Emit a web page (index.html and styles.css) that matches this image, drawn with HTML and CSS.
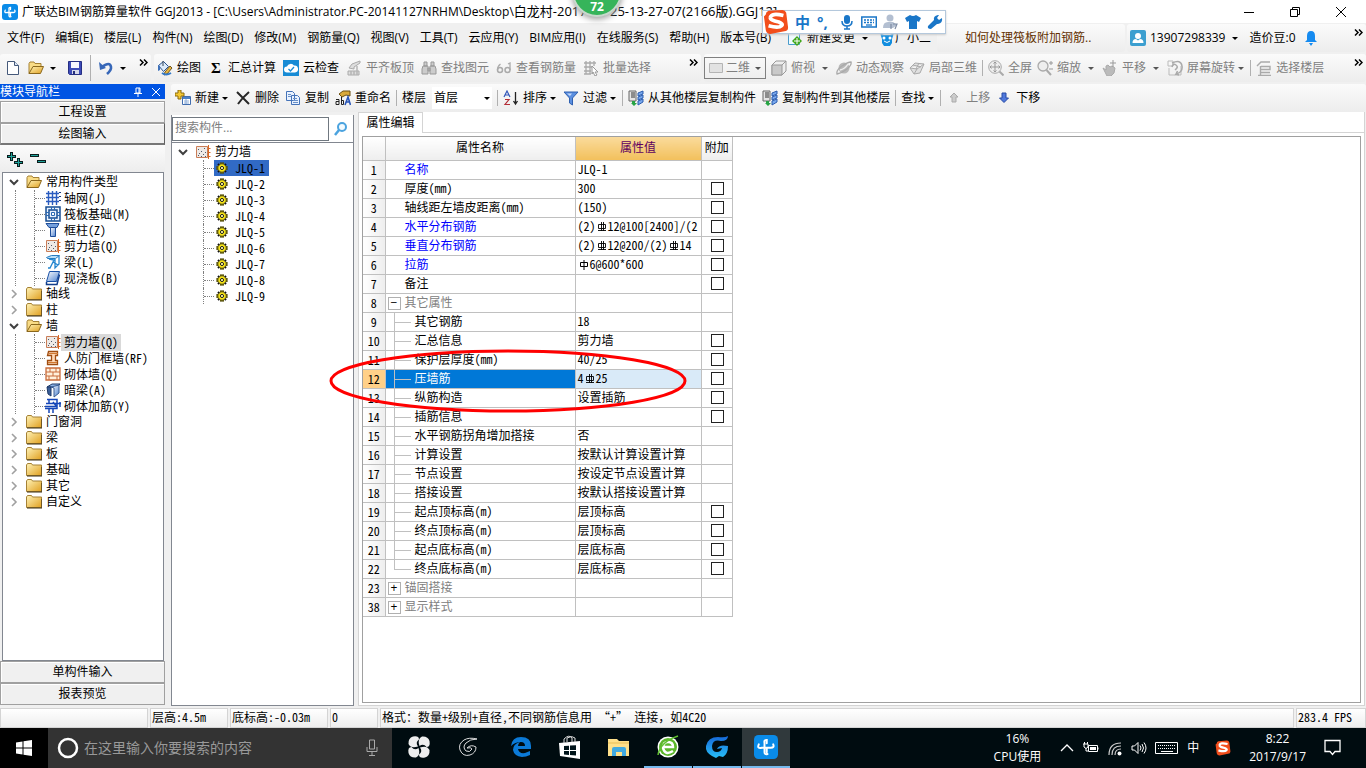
FILE: index.html
```html
<!DOCTYPE html>
<html lang="zh-CN">
<head>
<meta charset="utf-8">
<title>广联达BIM钢筋算量软件 GGJ2013</title>
<link rel="stylesheet" href="styles.css">
</head>
<body>
<svg class="defs" aria-hidden="true">
<defs>
<linearGradient id="gold" x1="0" y1="0" x2="1" y2="1"><stop offset="0" stop-color="#fff3b8"/><stop offset="1" stop-color="#e0a020"/></linearGradient>
<linearGradient id="steel" x1="0" y1="0" x2="1" y2="1"><stop offset="0" stop-color="#fff"/><stop offset="1" stop-color="#4f83d0"/></linearGradient>
<linearGradient id="aqua" x1="0" y1="0" x2="0" y2="1"><stop offset="0" stop-color="#1667d8"/><stop offset="1" stop-color="#28c0f8"/></linearGradient>
</defs>
<symbol id="app" viewBox="0 0 16 16"><rect width="16" height="16" rx="3" fill="#0a8be8"/><path d="M8.500 5.500V3.300q-2 0-1.500 2v6.200q0 1.700 2 1.200M3.200 6.200q-1.400 3 2 2.300h6q2.600 0 1.600-2.300M8.500 8.500v3" fill="none" stroke="#fff" stroke-width="1.300" stroke-linecap="round"/></symbol>
<symbol id="folder" viewBox="0 0 16 16"><path d="M.5 13.500V3l1-1.500h4l1 1.500h9v10.500z" fill="url(#gold)" stroke="#a58135"/><path d="M1 14h15V5" fill="none" stroke="#3e3112"/></symbol>
<symbol id="folder-open" viewBox="0 0 16 16"><path d="M1 13.500v-10l1-1.500h4l1 1.500h6v3" fill="#f9dc86" stroke="#a58135"/><path d="M1 13.500l4-7h10.500l-3 7z" fill="url(#gold)" stroke="#8a671c"/></symbol>
<symbol id="grid" viewBox="0 0 16 16"><path d="M3.500 1v14M7.500 1v14M11.500 1v14M1 3.500h13M1 7.500h13M1 11.500h13" stroke="#2a5cc0" fill="none" stroke-width="1.400"/><path d="M14 2.500h2M14 6.500h2M14 10.500h2" stroke="#16377c"/></symbol>
<symbol id="raft" viewBox="0 0 16 16"><path d="M1 1h14v14H1zM4 4h8v8H4z" fill="#e8f2ff" stroke="#174d92" stroke-width="1.500"/><path d="M6.500 6.500h3v3h-3zM6.500 1v3M9.500 1v3M6.500 12v3M9.500 12v3M1 6.500h3M1 9.500h3M12 6.500h3M12 9.500h3" fill="#fff" stroke="#2868b4"/></symbol>
<symbol id="column" viewBox="0 0 16 16"><path d="M1 1.500h13l-2 4H4z" fill="#739fdc" stroke="#1d4d9a"/><path d="M5.500 5.500h5v9h-5z" fill="url(#steel)" stroke="#1d4d9a"/></symbol>
<symbol id="wall" viewBox="0 0 16 16"><path d="M1.500 2.500h11v11h-11z" fill="#eee9e5" stroke="#c97d57"/><path d="M3 5.500h1M6 7.500h1M9 4.500h1M4 9.500h1M8 10.500h1M10 8.500h1M3 11.500h1M6 12.500h1M10 12.500h1" stroke="#505866"/><path d="M13.500 1v14M13 4.500h2.500M13 8.500h2.500M13 12.500h2.500" stroke="#d96924"/></symbol>
<symbol id="beam" viewBox="0 0 16 16"><path d="M1.500 3.500l5-2h8l-4 3h-8z" fill="#b8def8" stroke="#247ac0"/><path d="M4 5l5 1-4 8H3M10 5v9l4-4V2M8 8l5 3" fill="none" stroke="#2486cf" stroke-width="1.300"/></symbol>
<symbol id="slab" viewBox="0 0 16 16"><path d="M4.500 1.500h10l-3 10h-10z" fill="url(#steel)" stroke="#174fa5"/><path d="M1.500 12v2.500H12l2.500-10" fill="none" stroke="#123e8c" stroke-width="1.500"/></symbol>
<symbol id="frame" viewBox="0 0 16 16"><path d="M3.500 1.500h9v4h-2v5h2v4h-10v-4h4v-5h-4z" fill="#ffd9b8" stroke="#a04c10" stroke-width="1.300"/><path d="M4 3.500h9M3 12.500h9" stroke="#d07830"/></symbol>
<symbol id="brick" viewBox="0 0 16 16"><path d="M1 2h14v12H1z" fill="#fff0dc" stroke="#c96c3c" stroke-width="1.300"/><path d="M1 6h14M1 10h14M5 2v4M11 2v4M8 6v4M4 10v4M12 10v4" stroke="#c96c3c"/></symbol>
<symbol id="hidden" viewBox="0 0 16 16"><path d="M2 5l5-3h8l-4 3z" fill="#8fb5e8" stroke="#1c3868"/><path d="M2 5h4v9l-3-2z" fill="#3b5f98" stroke="#1c3868"/><path d="M6 5l8-2v8l-5 4V6z" fill="url(#steel)" stroke="#385c94"/></symbol>
<symbol id="tie" viewBox="0 0 16 16"><path d="M2 1.500h10v9H0M1 5.500h15M0 8.500h12M4 10v5M8 10v5M4 1v5M8 4l4 5M15 4v5" fill="none" stroke="#1546b8" stroke-width="1.500"/></symbol>
<symbol id="gear" viewBox="0 0 16 16"><path d="M6 3.500h4M6 12.500h4M3.500 6v4M12.500 6v4M4 4l2 2M12 4l-2 2M4 12l2-2M12 12l-2-2" stroke="#111" stroke-width="2"/><circle cx="8" cy="8" r="4" fill="#ffed18" stroke="#333" stroke-width=".6"/><path d="M7 2.500v3M9 2.500v3M7 10.500v3M9 10.500v3M2.500 7h3M2.500 9h3M10.500 7h3M10.500 9h3" stroke="#d9c800" stroke-width=".8"/><circle cx="8" cy="8" r="1.600" fill="#fff9a0" stroke="#222"/></symbol>
<symbol id="new" viewBox="0 0 16 16"><path d="M2.500 1.500h7l4 4v9h-11z" fill="#fff" stroke="#45597a"/><path d="M9.500 1.500v4h4" fill="#dce7f6" stroke="#45597a"/></symbol>
<symbol id="save" viewBox="0 0 16 16"><path d="M1.500 1.500h13v13h-12l-1-1z" fill="#3d4bb8" stroke="#252e83"/><path d="M4 2h8v6H4z" fill="#f7f7ff"/><path d="M5 10h7v4H5z" fill="#d6d9ea"/><path d="M6 11h2v3H6z" fill="#26307d"/></symbol>
<symbol id="undo" viewBox="0 0 16 16"><path d="M4 7q8-6 9 0 .5 3-4 7" fill="none" stroke="#3767b8" stroke-width="2.600"/><path d="M1 2l1 8 6-2z" fill="#3767b8"/></symbol>
<symbol id="paint" viewBox="0 0 16 16"><path d="M1.500 5.500l5-4 5 5-5 5z" fill="#dceafa" stroke="#2b538e"/><path d="M1 5v6l2-1V6z" fill="#3e71ba"/><path d="M6 6V1" stroke="#345"/><path d="M8 12l5-6 2 2-5 6-3 1z" fill="#e8b63e" stroke="#6d5420"/><path d="M5 13q4 3 9 0" fill="none" stroke="#3278c8" stroke-width="2"/></symbol>
<symbol id="cloud" viewBox="0 0 16 16"><path d="M0 0h16v16H0z" fill="#178bd5"/><path d="M4 12.500a3 3 0 010-6 4 4 0 017-1 3.500 3.500 0 011 7z" fill="#fff"/><path d="M5.500 9l2 2L11 7" fill="none" stroke="#178bd5" stroke-width="1.300"/></symbol>
<symbol id="align" viewBox="0 0 16 16"><path d="M3 8l3-4 8-3v2L8 7v2zM2 11h11v4H2z" fill="#ddd" stroke="#aaa"/><path d="M5 11v4M8 11v4M11 6v9" stroke="#b5b5b5" stroke-width="1.500"/></symbol>
<symbol id="find" viewBox="0 0 16 16"><path d="M3 2h3v4H3zM10 2h3v4h-3zM2 6h5v8H1V9zM9 6h5l1 3v5H9zM7 8h2v3H7z" fill="#ccc" stroke="#999"/></symbol>
<symbol id="glasses" viewBox="0 0 16 16"><circle cx="4" cy="10" r="2.500" fill="none" stroke="#aaa" stroke-width="1.500"/><circle cx="11.500" cy="10" r="2.500" fill="none" stroke="#aaa" stroke-width="1.500"/><path d="M1.500 10q0-4 3-6M14 10V3l-2 1" fill="none" stroke="#aaa" stroke-width="1.300"/></symbol>
<symbol id="batch" viewBox="0 0 16 16"><path d="M1 3h12M1 7h9M1 11h7M3 1v13M7 1v13M11 1v5M1 14h7" fill="none" stroke="#aaa" stroke-width="1.300"/><path d="M9 6l6 6h-3l2 3-2 1-2-4-1 2z" fill="#fff" stroke="#999"/></symbol>
<symbol id="rect" viewBox="0 0 16 16"><path d="M1.500 3.500h13v9h-13z" fill="#e2e2e2" stroke="#b4b4b4"/></symbol>
<symbol id="cube" viewBox="0 0 16 16"><path d="M1 5l4-4h10v10l-4 4H1z" fill="#eee" stroke="#999"/><path d="M1 5h10v10H1zM11 5l4-4" fill="#c9c9c9" stroke="#999"/></symbol>
<symbol id="orbit" viewBox="0 0 16 16"><circle cx="8" cy="8" r="5.500" fill="#b9b9b9"/><path d="M1 14q-1-4 5-8t9-4q1 3-4 7t-10 5z" fill="none" stroke="#aaa" stroke-width="1.300"/><path d="M4 10q5-1 8-6" stroke="#eee" fill="none" stroke-width="1.400"/></symbol>
<symbol id="local" viewBox="0 0 16 16"><path d="M1 8l5-5 9 1-4 9-6 1zM1 8l7 1 7-5M8 9l-3 5M4 5l8 2M10 3L7 9" fill="#e0e0e0" stroke="#aaa"/></symbol>
<symbol id="full" viewBox="0 0 16 16"><circle cx="7" cy="7" r="6.300" fill="#eee" stroke="#aaa"/><path d="M7 2v10M2 7h10M5.500 3.500L7 2l1.500 1.500M5.500 10.500L7 12l1.500-1.500M3.500 5.500L2 7l1.500 1.500M10.500 5.500L12 7l-1.500 1.500" fill="none" stroke="#999"/><path d="M11.500 11.500l4 4" stroke="#aaa" stroke-width="2"/></symbol>
<symbol id="zoom" viewBox="0 0 16 16"><circle cx="6" cy="6" r="5" fill="#eee" stroke="#aaa" stroke-width="1.300"/><path d="M9.500 10l4.500 5" stroke="#aaa" stroke-width="2"/><path d="M12 3h4M14 1v4M12 9h4" stroke="#999"/></symbol>
<symbol id="hand" viewBox="0 0 16 16"><path d="M1 8l3 2V6l2-1 2 2 2-1 3 2-1 5-3 3H5z" fill="#bbb" stroke="#aaa"/><path d="M11 0v7M8 3h6" stroke="#999"/></symbol>
<symbol id="rotate" viewBox="0 0 16 16"><path d="M1 1h5v5H1zM2 8v7h12V6" fill="none" stroke="#bbb"/><path d="M5 3q9-4 10 3 1 6-6 8l1.500-3M9 14l3 1M5 7q1-4 4-2t-1 5" fill="none" stroke="#aaa" stroke-width="1.500"/></symbol>
<symbol id="floors" viewBox="0 0 16 16"><path d="M1 6l4-4h9M5 6.500h9v3H5M5 12.500h9M2 15.500h13M4.500 6v9" fill="none" stroke="#aaa" stroke-width="1.400"/></symbol>
<symbol id="add" viewBox="0 0 16 16"><path d="M7.500 6.500h8v8h-8z" fill="#fff" stroke="#416daf"/><path d="M8 7h7v2H8z" fill="#4c81c8"/><path d="M9 11h5M9 13h5M11 9v5" stroke="#8faed8"/><path d="M3 0h3v3h3v3H6v3H3V6H0V3h3z" fill="#f5c832" stroke="#8a6b0d"/></symbol>
<symbol id="del" viewBox="0 0 16 16"><path d="M2 2q5 5 12 12M14 2Q7 8 3 14" fill="none" stroke="#282828" stroke-width="2"/></symbol>
<symbol id="copy" viewBox="0 0 16 16"><path d="M1.500 1.500h6l2 2v7h-8zM6.500 5.500h6l2 2v7h-8z" fill="#e9f2ff" stroke="#4573b8"/><path d="M3 4.500h3M3 6.500h3M8 8.500h4M8 10.500h5M8 12.500h5" stroke="#6990c8"/></symbol>
<symbol id="rename" viewBox="0 0 16 16"><path d="M4 4l4-3h7v5l-4-1-4 2z" fill="#d9a93a" stroke="#6c5012"/><path d="M1 9.500h3v5H1v-3h3M6.500 7v7.500h2v-4h-2" fill="none" stroke="#222"/><path d="M10 15l3-8 2.500 8M11 12h4" fill="none" stroke="#2855b8" stroke-width="1.600"/></symbol>
<symbol id="sort" viewBox="0 0 16 16"><path d="M1 7l3-6 3 6M2 5h4" fill="none" stroke="#3257ba" stroke-width="1.200"/><path d="M2 9.500h4l-4 5h5" fill="none" stroke="#b32d36" stroke-width="1.200"/><path d="M12.500 2v12M10.500 11l2 3 2-3" fill="none" stroke="#222" stroke-width="1.300"/></symbol>
<symbol id="filter" viewBox="0 0 16 16"><path d="M1 2h14L9.500 8v7L6.500 13V8z" fill="#5b8fe0" stroke="#2f60b0"/><path d="M4 3.500h5L7 6z" fill="#c8dcfa"/></symbol>
<symbol id="floorcopy" viewBox="0 0 16 16"><path d="M1 1h7v10H1z" fill="#e5e5e5" stroke="#666"/><path d="M3 3h4M3 5h4M3 7h4" stroke="#333"/><path d="M10 3l5-2v3l-5 2zM10 7l5-2v3l-5 2zM10 11l5-2v3l-5 3z" fill="#79a8ed" stroke="#2b5cae"/><path d="M4 11h3v2h2l-3 3-3-3h1z" fill="#27a344"/></symbol>
<symbol id="up" viewBox="0 0 16 16"><path d="M8 3l4 4h-2v5H6V7H4z" fill="#ccc" stroke="#aaa"/></symbol>
<symbol id="down" viewBox="0 0 16 16"><path d="M6 3h4v5h2.500L8 12.500 3.500 8H6z" fill="#4f78dc" stroke="#274aa5"/></symbol>
<symbol id="change" viewBox="0 0 16 16"><path d="M1.500 1.500h11v13h-11z" fill="#effaff" stroke="#4a9ccc"/><path d="M10 6l5 5-5 5-5-5z" fill="#3fa619"/><path d="M10 8v6M7 11h6" stroke="#fff"/></symbol>
<symbol id="fairy" viewBox="0 0 16 16"><path d="M1 3l4 2h6l4-2-2 6v4l-2 3H5l-2-3V9z" fill="#118ddf"/><circle cx="5" cy="8" r="1.500" fill="#fff"/><circle cx="11" cy="8" r="1.500" fill="#fff"/><path d="M5 11q3 3 6 0" fill="none" stroke="#fff"/></symbol>
<symbol id="user" viewBox="0 0 16 16"><rect width="16" height="16" rx="2" fill="#3c9fd0"/><circle cx="8" cy="6" r="3" fill="#fff"/><path d="M2.500 13q0-4 3.500-4l2 1.500L10 9q3.500 0 3.500 4z" fill="#fff"/></symbol>
<symbol id="bell" viewBox="0 0 16 16"><path d="M8 1q4 0 4 5v4l2 2H2l2-2V6q0-5 4-5zM6 13h4l-2 3z" fill="#168bf0"/></symbol>
<symbol id="lens" viewBox="0 0 16 16"><circle cx="9" cy="6" r="4" fill="#f3fbff" stroke="#4ba3df" stroke-width="2"/><path d="M6 9l-4 5" stroke="#4ba3df" stroke-width="2.500"/></symbol>
<symbol id="sogou" viewBox="0 0 28 28"><path d="M3 6q0-3 3-4l15-1q3 0 4 3l2 16q0 4-4 4L8 27q-4 0-5-4L1 8z" fill="#f24e1c"/><path d="M22 7q-13-3-14 2-1 3 9 5 5 2 3 4-3 3-14 0" fill="none" stroke="#fff" stroke-width="4"/></symbol>
<symbol id="mic" viewBox="0 0 16 16"><rect x="5" y="1" width="6" height="9" rx="3" fill="#1976c8"/><path d="M3 7q0 5 5 5t5-5M8 12v3M5 15h6" fill="none" stroke="#1976c8" stroke-width="1.500"/></symbol>
<symbol id="keys" viewBox="0 0 16 16"><path d="M.8 3h14.500v10H.8z" fill="#fff" stroke="#1976c8" stroke-width="1.500"/><path d="M3 6h10M3 8.500h10" stroke="#1976c8" stroke-width="1.500" stroke-dasharray="2 1"/><path d="M5 11h6" stroke="#1976c8" stroke-width="1.300"/></symbol>
<symbol id="person" viewBox="0 0 16 16"><circle cx="7" cy="4" r="3.500" fill="#b3bfd1"/><path d="M0 14q0-6 5-6h5l4 3-4 3z" fill="#b3bfd1"/><path d="M8 10v5M10 10h4l-2 5" fill="none" stroke="#7f8da5" stroke-width="1.200"/></symbol>
<symbol id="shirt" viewBox="0 0 16 16"><path d="M5 1q3 2 6 0l5 3-2 4-2-1v8H4V7L2 8 0 4z" fill="#1976c8"/></symbol>
<symbol id="wrench" viewBox="0 0 16 16"><path d="M1 12l6-6q-1-4 4-5l1 0-2 3 2 2 3-2q1 5-4 6h-1l-6 5q-4 0-3-3z" fill="#1976c8"/></symbol>
<symbol id="rebar" viewBox="0 0 10 10"><path d="M1.500 2.500h7v4h-7zM4.500 0v9M6.500 0v9M1 8.500h8" fill="none" stroke="#000" stroke-width=".9"/></symbol>
<symbol id="rebar1" viewBox="0 0 10 10"><path d="M1.500 2.500h7v4h-7zM5 0v10" fill="none" stroke="#000"/></symbol>
<symbol id="chev" viewBox="0 0 10 10"><path d="M3 1l4 4-4 4" fill="none" stroke="#a0a0a0" stroke-width="1.600"/></symbol>
<symbol id="chevd" viewBox="0 0 10 10"><path d="M1 3l4 4 4-4" fill="none" stroke="#404040" stroke-width="2"/></symbol>
<symbol id="more" viewBox="0 0 9 7"><path d="M1 .5l3 3-3 3M5 .5l3 3-3 3" fill="none" stroke="#000" stroke-width="1.500"/></symbol>
</svg>

<header class="titlebar">
  <svg class="i"><use href="#app"/></svg>
  <h1>广联达BIM钢筋算量软件 GGJ2013 - [C:\Users\Administrator.PC-20141127NRHM\Desktop\<span class="file">白龙村-2017-08-25-13-27-07(2166版).GGJ12]</span></h1>
  <div class="winbtns">
    <button aria-label="最小化"><svg viewBox="0 0 12 12"><path d="M1 6.500h10" stroke="#000"/></svg></button>
    <button aria-label="还原"><svg viewBox="0 0 12 12"><path d="M1.500 3.500h7v7h-7zM3.500 3v-1.500h7v7H9" fill="none" stroke="#000"/></svg></button>
    <button aria-label="关闭"><svg viewBox="0 0 12 12"><path d="M1 1l10 10M11 1L1 11" stroke="#000"/></svg></button>
  </div>
</header>
<div class="ball">72</div>
<div class="ime">
  <svg class="ime-logo"><use href="#sogou"/></svg>
  <b>中</b><b>°,</b>
  <svg class="i"><use href="#mic"/></svg><svg class="i"><use href="#keys"/></svg><svg class="i"><use href="#person"/></svg><svg class="i"><use href="#shirt"/></svg><svg class="i"><use href="#wrench"/></svg>
</div>

<nav class="menubar">
  <div class="menus">
    <button>文件(F)</button><button>编辑(E)</button><button>楼层(L)</button><button>构件(N)</button><button>绘图(D)</button><button>修改(M)</button><button>钢筋量(Q)</button><button>视图(V)</button><button>工具(T)</button><button>云应用(Y)</button><button>BIM应用(I)</button><button>在线服务(S)</button><button>帮助(H)</button><button>版本号(B)</button>
  </div>
  <div class="extra">
    <button class="tb"><svg class="i"><use href="#change"/></svg>新建变更<span class="dd"></span></button>
    <button class="tb tight"><svg class="i"><use href="#fairy"/></svg>广小二</button>
  </div>
  <a class="tip band" href="#">如何处理筏板附加钢筋..</a>
  <div class="account band">
    <button class="tb"><svg class="i"><use href="#user"/></svg>13907298339<span class="dd"></span></button>
    <span>造价豆:0</span><svg class="i"><use href="#bell"/></svg>
    <svg class="more"><use href="#more"/></svg>
  </div>
</nav>

<div class="tools">
  <div class="bar files band">
    <button class="tb" aria-label="新建"><svg class="i"><use href="#new"/></svg></button>
    <button class="tb" aria-label="打开"><svg class="i"><use href="#folder-open"/></svg><span class="dd"></span></button>
    <button class="tb" aria-label="保存"><svg class="i"><use href="#save"/></svg></button>
    <span class="sep"></span>
    <button class="tb" aria-label="撤销"><svg class="i"><use href="#undo"/></svg><span class="dd"></span></button>
    <svg class="more"><use href="#more"/></svg>
  </div>
  <div class="bar draw band">
    <button class="tb"><svg class="i"><use href="#paint"/></svg>绘图</button>
    <button class="tb"><span class="i sigma">Σ</span>汇总计算</button>
    <button class="tb"><svg class="i"><use href="#cloud"/></svg>云检查</button>
    <button class="tb off"><svg class="i"><use href="#align"/></svg>平齐板顶</button>
    <button class="tb off"><svg class="i"><use href="#find"/></svg>查找图元</button>
    <button class="tb off"><svg class="i"><use href="#glasses"/></svg>查看钢筋量</button>
    <button class="tb off"><svg class="i"><use href="#batch"/></svg>批量选择</button>
    <svg class="more"><use href="#more"/></svg>
  </div>
  <div class="bar view band">
    <button class="tb off boxed"><svg class="i"><use href="#rect"/></svg>二维<span class="dd"></span></button>
    <button class="tb off"><svg class="i"><use href="#cube"/></svg>俯视<span class="dd"></span></button>
    <button class="tb off"><svg class="i"><use href="#orbit"/></svg>动态观察</button>
    <button class="tb off"><svg class="i"><use href="#local"/></svg>局部三维</button>
    <span class="sep"></span>
    <button class="tb off"><svg class="i"><use href="#full"/></svg>全屏</button>
    <button class="tb off"><svg class="i"><use href="#zoom"/></svg>缩放<span class="dd"></span></button>
    <button class="tb off"><svg class="i"><use href="#hand"/></svg>平移<span class="dd"></span></button>
    <button class="tb off near"><svg class="i"><use href="#rotate"/></svg>屏幕旋转<span class="dd"></span></button>
    <span class="sep"></span>
    <button class="tb off"><svg class="i"><use href="#floors"/></svg>选择楼层</button>
    <svg class="more"><use href="#more"/></svg>
  </div>
</div>

<main>
  <aside class="nav">
    <div class="nav-title"><span>模块导航栏</span>
      <svg class="s" viewBox="0 0 10 10"><path d="M3 1h4v5H3zM1 6.500h8M5 6v4M6 1v5" fill="none" stroke="#fff"/></svg>
      <svg class="s" viewBox="0 0 10 10"><path d="M1 1l8 8M9 1L1 9" stroke="#fff"/></svg>
    </div>
    <button class="wide">工程设置</button>
    <button class="wide on">绘图输入</button>
    <div class="expand">
      <button aria-label="全部展开"><svg viewBox="0 0 16 16"><path d="M3 0h3v3h3v3H6v3H3V6H0V3h3z" fill="#0a1c1c"/><path d="M10 6h3v3h3v3h-3v3h-3v-3H7V9h3z" fill="#0a1c1c"/><path d="M4.500 1v7M1 4.500h7M11.500 7v7M8 10.500h7" stroke="#1fa39b"/></svg></button>
      <button aria-label="全部折叠"><svg viewBox="0 0 16 16"><path d="M0 2h9v3H0zM7 8h9v3H7z" fill="#0a1c1c"/><path d="M1 3.500h7M8 9.500h7" stroke="#1fa39b"/></svg></button>
    </div>
    <ul class="tree">
      <li><div class="row"><svg class="c"><use href="#chevd"/></svg><svg class="i"><use href="#folder-open"/></svg><span>常用构件类型</span></div>
        <ul>
          <li><svg class="i"><use href="#grid"/></svg><span>轴网<i>(J)</i></span></li>
          <li><svg class="i"><use href="#raft"/></svg><span>筏板基础<i>(M)</i></span></li>
          <li><svg class="i"><use href="#column"/></svg><span>框柱<i>(Z)</i></span></li>
          <li><svg class="i"><use href="#wall"/></svg><span>剪力墙<i>(Q)</i></span></li>
          <li><svg class="i"><use href="#beam"/></svg><span>梁<i>(L)</i></span></li>
          <li><svg class="i"><use href="#slab"/></svg><span>现浇板<i>(B)</i></span></li>
        </ul></li>
      <li><div class="row"><svg class="c"><use href="#chev"/></svg><svg class="i"><use href="#folder"/></svg><span>轴线</span></div></li>
      <li><div class="row"><svg class="c"><use href="#chev"/></svg><svg class="i"><use href="#folder"/></svg><span>柱</span></div></li>
      <li><div class="row"><svg class="c"><use href="#chevd"/></svg><svg class="i"><use href="#folder-open"/></svg><span>墙</span></div>
        <ul>
          <li><svg class="i"><use href="#wall"/></svg><span class="cur">剪力墙<i>(Q)</i></span></li>
          <li><svg class="i"><use href="#frame"/></svg><span>人防门框墙<i>(RF)</i></span></li>
          <li><svg class="i"><use href="#brick"/></svg><span>砌体墙<i>(Q)</i></span></li>
          <li><svg class="i"><use href="#hidden"/></svg><span>暗梁<i>(A)</i></span></li>
          <li><svg class="i"><use href="#tie"/></svg><span>砌体加筋<i>(Y)</i></span></li>
        </ul></li>
      <li><div class="row"><svg class="c"><use href="#chev"/></svg><svg class="i"><use href="#folder"/></svg><span>门窗洞</span></div></li>
      <li><div class="row"><svg class="c"><use href="#chev"/></svg><svg class="i"><use href="#folder"/></svg><span>梁</span></div></li>
      <li><div class="row"><svg class="c"><use href="#chev"/></svg><svg class="i"><use href="#folder"/></svg><span>板</span></div></li>
      <li><div class="row"><svg class="c"><use href="#chev"/></svg><svg class="i"><use href="#folder"/></svg><span>基础</span></div></li>
      <li><div class="row"><svg class="c"><use href="#chev"/></svg><svg class="i"><use href="#folder"/></svg><span>其它</span></div></li>
      <li><div class="row"><svg class="c"><use href="#chev"/></svg><svg class="i"><use href="#folder"/></svg><span>自定义</span></div></li>
    </ul>
    <button class="wide">单构件输入</button>
    <button class="wide">报表预览</button>
  </aside>

  <div class="work">
    <div class="bar edit band">
      <button class="tb near"><svg class="i"><use href="#add"/></svg>新建<span class="dd"></span></button>
      <button class="tb"><svg class="i"><use href="#del"/></svg>删除</button>
      <button class="tb"><svg class="i"><use href="#copy"/></svg>复制</button>
      <button class="tb"><svg class="i"><use href="#rename"/></svg>重命名</button>
      <span class="sep"></span>
      <label for="floor">楼层</label>
      <select id="floor"><option>首层</option></select>
      <span class="sep"></span>
      <button class="tb near"><svg class="i"><use href="#sort"/></svg>排序<span class="dd"></span></button>
      <button class="tb near"><svg class="i"><use href="#filter"/></svg>过滤<span class="dd"></span></button>
      <span class="sep"></span>
      <button class="tb"><svg class="i"><use href="#floorcopy"/></svg>从其他楼层复制构件</button>
      <button class="tb"><svg class="i"><use href="#floorcopy"/></svg>复制构件到其他楼层</button>
      <span class="sep"></span>
      <button class="tb near">查找<span class="dd"></span></button>
      <span class="sep"></span>
      <button class="tb off"><svg class="i"><use href="#up"/></svg>上移</button>
      <button class="tb"><svg class="i"><use href="#down"/></svg>下移</button>
    </div>
    <div class="panes">
      <section class="comps">
        <div class="search"><input type="text" placeholder="搜索构件..." aria-label="搜索构件"><button aria-label="搜索"><svg class="i"><use href="#lens"/></svg></button></div>
        <div class="row root"><svg class="c"><use href="#chevd"/></svg><svg class="i"><use href="#wall"/></svg><span>剪力墙</span></div>
        <ul class="complist">
          <li class="sel"><svg class="i"><use href="#gear"/></svg><i>JLQ-1</i></li>
          <li><svg class="i"><use href="#gear"/></svg><i>JLQ-2</i></li>
          <li><svg class="i"><use href="#gear"/></svg><i>JLQ-3</i></li>
          <li><svg class="i"><use href="#gear"/></svg><i>JLQ-4</i></li>
          <li><svg class="i"><use href="#gear"/></svg><i>JLQ-5</i></li>
          <li><svg class="i"><use href="#gear"/></svg><i>JLQ-6</i></li>
          <li><svg class="i"><use href="#gear"/></svg><i>JLQ-7</i></li>
          <li><svg class="i"><use href="#gear"/></svg><i>JLQ-8</i></li>
          <li><svg class="i"><use href="#gear"/></svg><i>JLQ-9</i></li>
        </ul>
      </section>
      <section class="editor">
        <div class="tabs"><button class="tab">属性编辑</button></div>
        <div class="sheet">
          <svg class="mark" viewBox="0 0 358 64"><ellipse cx="179" cy="32" rx="177" ry="30" fill="none" stroke="#f00" stroke-width="3"/></svg>
          <table>
            <thead><tr><th class="no"></th><th class="name">属性名称</th><th class="val hot">属性值</th><th class="ext">附加</th></tr></thead>
            <tbody>
              <tr><th>1</th><td class="b">名称</td><td><i>JLQ-1</i></td><td></td></tr>
              <tr><th>2</th><td>厚度<i>(mm)</i></td><td><i>300</i></td><td><input type="checkbox" aria-label="附加 厚度"></td></tr>
              <tr><th>3</th><td>轴线距左墙皮距离<i>(mm)</i></td><td><i>(150)</i></td><td><input type="checkbox" aria-label="附加 轴线距左墙皮距离"></td></tr>
              <tr><th>4</th><td class="b">水平分布钢筋</td><td><i>(2)<svg class="r"><use href="#rebar"/></svg>12@100[2400]/(2</i></td><td><input type="checkbox" aria-label="附加 水平分布钢筋"></td></tr>
              <tr><th>5</th><td class="b">垂直分布钢筋</td><td><i>(2)<svg class="r"><use href="#rebar"/></svg>12@200/(2)<svg class="r"><use href="#rebar"/></svg>14</i></td><td><input type="checkbox" aria-label="附加 垂直分布钢筋"></td></tr>
              <tr><th>6</th><td class="b">拉筋</td><td><i><svg class="r"><use href="#rebar1"/></svg>6@600*600</i></td><td><input type="checkbox" aria-label="附加 拉筋"></td></tr>
              <tr><th>7</th><td>备注</td><td></td><td><input type="checkbox" aria-label="附加 备注"></td></tr>
              <tr><th>8</th><td class="g"><button class="pm" aria-label="折叠">−</button>其它属性</td><td></td><td></td></tr>
              <tr class="k"><th>9</th><td>其它钢筋</td><td><i>18</i></td><td></td></tr>
              <tr class="k"><th>10</th><td>汇总信息</td><td>剪力墙</td><td><input type="checkbox" aria-label="附加 汇总信息"></td></tr>
              <tr class="k"><th>11</th><td>保护层厚度<i>(mm)</i></td><td><i>40/25</i></td><td><input type="checkbox" aria-label="附加 保护层厚度"></td></tr>
              <tr class="k active"><th>12</th><td>压墙筋</td><td><i>4<svg class="r"><use href="#rebar"/></svg>25</i></td><td><input type="checkbox" aria-label="附加 压墙筋"></td></tr>
              <tr class="k"><th>13</th><td>纵筋构造</td><td>设置插筋</td><td><input type="checkbox" aria-label="附加 纵筋构造"></td></tr>
              <tr class="k"><th>14</th><td>插筋信息</td><td></td><td><input type="checkbox" aria-label="附加 插筋信息"></td></tr>
              <tr class="k"><th>15</th><td>水平钢筋拐角增加搭接</td><td>否</td><td></td></tr>
              <tr class="k"><th>16</th><td>计算设置</td><td>按默认计算设置计算</td><td></td></tr>
              <tr class="k"><th>17</th><td>节点设置</td><td>按设定节点设置计算</td><td></td></tr>
              <tr class="k"><th>18</th><td>搭接设置</td><td>按默认搭接设置计算</td><td></td></tr>
              <tr class="k"><th>19</th><td>起点顶标高<i>(m)</i></td><td>层顶标高</td><td><input type="checkbox" aria-label="附加 起点顶标高"></td></tr>
              <tr class="k"><th>20</th><td>终点顶标高<i>(m)</i></td><td>层顶标高</td><td><input type="checkbox" aria-label="附加 终点顶标高"></td></tr>
              <tr class="k"><th>21</th><td>起点底标高<i>(m)</i></td><td>层底标高</td><td><input type="checkbox" aria-label="附加 起点底标高"></td></tr>
              <tr class="k last"><th>22</th><td>终点底标高<i>(m)</i></td><td>层底标高</td><td><input type="checkbox" aria-label="附加 终点底标高"></td></tr>
              <tr><th>23</th><td class="g"><button class="pm" aria-label="展开">+</button>锚固搭接</td><td></td><td></td></tr>
              <tr><th>38</th><td class="g"><button class="pm" aria-label="展开">+</button>显示样式</td><td></td><td></td></tr>
            </tbody>
          </table>
        </div>
      </section>
    </div>
  </div>
</main>

<footer class="status">
  <span></span><span>层高<i>:4.5m</i></span><span>底标高<i>:-0.03m</i></span><span><i>0</i></span><span>格式：数量<i>+</i>级别<i>+</i>直径<i>,</i>不同钢筋信息用<i> “+” </i>连接，如<i>4C20</i></span><span><i>283.4 FPS</i></span>
</footer>

<div class="taskbar">
  <button class="start" aria-label="开始"><svg viewBox="0 0 16 16"><path d="M0 2.500L6.500 1.500v6H0zM7.500 1.300L16 0v7.500H7.500zM0 8.500h6.500v6L0 13.500zM7.500 8.500H16V16l-8.500-1.300z" fill="#fff"/></svg></button>
  <div class="cortana">
    <svg class="ring" viewBox="0 0 22 22"><circle cx="11" cy="11" r="9" fill="none" stroke="#fff" stroke-width="2.500"/></svg>
    <input type="text" placeholder="在这里输入你要搜索的内容" aria-label="搜索">
    <svg class="voice" viewBox="0 0 12 18"><path d="M3.500 1h5v9h-5zM1 8v4.500h10V8M6 12.500V16M3 16.500h6" fill="none" stroke="#aaa"/></svg>
  </div>
  <div class="apps first">
    <button aria-label="应用"><svg viewBox="0 0 24 24"><g fill="#eee"><path d="M11 11.500Q4 14 1.500 9 1 3 6 1.500q6-1 6 3-4 3-1 7z"/><path d="M12.500 11Q10 4 15 1.500q6-.5 7.500 4.500 1 6-3 6-3-4-7-1z"/><path d="M13 12.500q7-2.500 9.500 2.500.5 6-4.500 7.500-6 1-6-3 4-3 1-7z"/><path d="M11.500 13q2.500 7-2.500 9.500-6 .5-7.500-4.500-1-6 3-6 3 4 7 1z"/></g></svg></button>
    <button aria-label="应用"><svg viewBox="0 0 24 24"><path d="M21 4q-8-2-13 1-6 4-4 10 3 7 10 5 6-2 6-8-5-3-9 1 4-1 5 1-2 4-6 2-4-4 0-8 4-4 11-4z" fill="none" stroke="#ddd"/></svg></button>
  </div>
  <div class="apps">
    <button aria-label="Edge"><svg viewBox="0 0 24 24"><path d="M2 11Q3 2 12 2q10 0 10 9v3H9q1 5 7 4l5-2v4q-4 2-8 2-8-1-9-7 0-6 7-8-2 2-2 4h7q0-4-4-4-6 0-10 4z" fill="#0b7ad7"/></svg></button>
    <button aria-label="应用商店"><svg viewBox="0 0 24 24"><path d="M1 8l21-2v18L2 21z" fill="#fff"/><path d="M6 8V4q5-5 8-1v4M9 7V3q5-3 8 0v4" fill="none" stroke="#ddd"/><path d="M6 11l5-.3V15H6zM12 10.600l6-.4V15h-6zM6 16h5v4l-5-.5zM12 16h6v4.600l-6-.5z" fill="#00141a"/></svg></button>
    <button aria-label="文件资源管理器"><svg viewBox="0 0 24 24"><path d="M1 4h9l2 2h10v15H1z" fill="#ffe08a"/><path d="M1 8h21" stroke="#e7bd57"/><path d="M5 21v-7q0-2 2-2h10q2 0 2 2v7h-4v-4H9v4z" fill="#41a9e0"/></svg></button>
    <button aria-label="浏览器" class="run"><svg viewBox="0 0 24 24"><circle cx="12" cy="12" r="10.500" fill="#fff"/><circle cx="12" cy="12" r="9" fill="#5cb72b"/><path d="M17 16q-8 5-10-3 0-6 5-6t5 5H8" fill="none" stroke="#fff" stroke-width="2.500"/><path d="M2 20Q4 7 22 1" fill="none" stroke="#60c030" stroke-width="1.500"/></svg></button>
    <button aria-label="广联达" class="run"><svg viewBox="0 0 24 24"><path d="M23 1q0 5-7 5-8-2-9 5 0 6 5 6 4 0 5-4l-5 1q2-5 11-3 0 8-5 11l-4-1-3 2-4-2Q0 17 1 11 3 2 13 2q7 1 10-1z" fill="url(#aqua)"/></svg></button>
    <button aria-label="钢筋算量" class="run now"><svg viewBox="0 0 24 24"><use href="#app"/></svg></button>
  </div>
  <div class="tray">
    <span class="cpu">16%<br>CPU使用</span>
    <svg viewBox="0 0 16 16"><path d="M2 11l6-6 6 6" fill="none" stroke="#fff" stroke-width="1.300"/></svg>
    <svg viewBox="0 0 16 16"><path d="M5.500 5.500h9v6h-9zM15 7.500v2M0 4h5M1 4v3q2 3 4 0V4M1.500 2v2M4.500 2v2M3 8v3h2" fill="none" stroke="#fff"/><path d="M7 7h6v3H7z" fill="#fff"/></svg>
    <svg viewBox="0 0 16 16"><path d="M2 15Q2 3 14 3M5 15q0-9 9-9M8 15q0-6 6-6" fill="none" stroke="#ccc" stroke-width="1.200"/><circle cx="12.500" cy="13.500" r="2" fill="#fff"/></svg>
    <svg viewBox="0 0 16 16"><path d="M1 6h2.500L7 2.500v11L3.500 10H1zM9 5.500q2 2.500 0 5M11 4q3 4 0 8M13 2.500q4 5.500 0 11" fill="none" stroke="#fff"/></svg>
    <svg class="kb" viewBox="0 0 24 14"><path d="M.5 1.500h22v11H.5z" fill="none" stroke="#fff"/><path d="M3 4.500h18M3 7.500h18" stroke="#fff" stroke-dasharray="1 1"/><path d="M6 10.500h12" stroke="#fff"/></svg>
    <span class="lang">中</span>
    <svg viewBox="0 0 28 28"><use href="#sogou"/></svg>
    <span class="clock">8:22<br>2017/9/17</span>
    <svg class="note" viewBox="0 0 18 18"><path d="M1 1.500h15v11h-5l-2.500 3-2.500-3H1z" fill="none" stroke="#fff" stroke-width="1.300"/></svg>
  </div>
</div>
</body>
</html>
```

FILE: styles.css
```css
* { box-sizing: border-box; }
body {
  margin: 0;
  min-height: 100vh;
  display: flex;
  flex-direction: column;
  position: relative;
  overflow: hidden;
  background: #f0f0f0;
  color: #000;
  font: 12px/16px "Open Sans", "Noto Sans CJK SC", sans-serif;
  white-space: nowrap;
}
button, input, select { font: inherit; color: inherit; margin: 0; }
button { padding: 0; border: 0; background: none; }
ul { list-style: none; margin: 0; padding: 0; }
svg { display: block; flex: none; }
.defs { position: absolute; width: 0; height: 0; }
i, tbody th { font: 12px/16px "Noto Sans Mono CJK SC", "Noto Sans CJK SC", monospace; white-space: pre; }
.i { width: 16px; height: 16px; flex: none; }
.c { width: 10px; height: 10px; }
.s { width: 10px; height: 10px; }

.titlebar { display: flex; align-items: center; gap: 4px; height: 23px; padding: 0 2px; background: #fff; }
.titlebar h1 { flex: 1; margin: 0; font-size: 12px; font-weight: 400; }
.file { font-size: 13px; }
.winbtns { display: flex; }
.winbtns button { width: 46px; height: 20px; display: flex; justify-content: center; align-items: center; }
.winbtns svg { width: 12px; height: 12px; }

.ball {
  position: absolute; left: 572px; top: -33px; width: 50px; height: 50px;
  border-radius: 50%; border: 2px solid #c8d8cc; background: #36b45a;
  color: #fff; font-weight: 700; line-height: 16px; text-align: center; padding-top: 30px;
  box-shadow: 0 2px 6px #999; z-index: 2;
}
.ime {
  position: absolute; left: 762px; top: 10px; height: 24px; width: 184px; z-index: 2;
  display: flex; align-items: center; gap: 6px; background: #fff; border: 1px solid #b4c8dc;
  box-shadow: 0 1px 2px #ccc; color: #1976c8;
}
.ime-logo { width: 26px; height: 26px; }
.ime b { font-size: 15px; width: 16px; }

.band { background: linear-gradient(#fbfbfb, #ededed); border-radius: 3px; }
.menubar { display: flex; height: 29px; padding-top: 1px; align-items: stretch; }
.menus { display: flex; gap: 11px; padding-left: 7px; align-items: center; width: 787px; flex: none; }
.extra { display: flex; gap: 7px; align-items: center; width: 150px; flex: none; }
.tip { display: flex; align-items: center; padding-left: 28px; width: 188px; flex: none; color: #633000; text-decoration: none; }
.account { flex: 1; margin-left: 2px; padding-left: 3px; display: flex; align-items: center; gap: 7px; }
.tb { display: flex; align-items: center; gap: 4px; height: 22px; flex: none; }
.tb.off { color: #808080; }
.tb.tight { gap: 0; }
.dd { border: 3px solid transparent; border-top-color: #000; border-bottom: 0; margin: 0 4px 0 3px; }
.near .dd, .view .near .dd { margin: 0 1px 0 -1px; }
.view .dd { margin-right: 3px; }
.off .dd { border-top-color: #555; }
.more { width: 9px; height: 7px; margin: 5px 3px 0 auto; align-self: flex-start; }

.tools { display: flex; height: 30px; padding: 2px 0 0; gap: 3px; }
.bar { display: flex; align-items: center; gap: 7px; }
.files { width: 151px; padding-left: 5px; flex: none; }
.files .tb { gap: 3px; }
.files .sep { height: 26px; }
.draw { width: 547px; padding-left: 3px; flex: none; }
.view { flex: 1; gap: 5px; }
.sep { width: 1px; height: 16px; background: #b0b0b0; flex: none; }
.sigma { font: 700 15px/16px "Liberation Serif", serif; text-align: center; }
.boxed { border: 1px solid #808080; padding: 0 1px 0 3px; gap: 2px; }

main { flex: 1; display: flex; gap: 6px; padding-top: 2px; min-height: 0; }
.nav { width: 165px; display: flex; flex-direction: column; flex: none; padding-bottom: 2px; }
.nav-title { display: flex; align-items: center; height: 15px; background: #0054e3; color: #fff; gap: 8px; padding-right: 4px; margin-bottom: 2px; }
.nav-title span { flex: 1; }
.wide { height: 22px; border: 1px solid #a0a0a0; box-shadow: inset 1px 1px #fff; flex: none; }
.wide.on { border-right-color: #606060; border-bottom: 2px solid #777; }
.expand { height: 27px; display: flex; gap: 7px; align-items: center; padding: 2px 7px 0; background: linear-gradient(#fbfbfb, #ededed); }
.expand svg { width: 16px; height: 16px; }
.tree { flex: 1; margin: 0 1px 0 2px; padding-top: 1px; background: #fff; border: 1px solid #828790; }
.row { display: flex; align-items: center; height: 16px; gap: 7px; padding-left: 6px; }
.row .i + span { margin-left: -3px; }
.tree > li > ul { margin-left: 12px; padding-left: 18px; border-left: 1px dotted #808080; }
.tree ul li, .complist li { display: flex; align-items: center; height: 16px; border-left: 1px dotted #808080; }
.tree ul li::before, .complist li::before { content: ""; width: 10px; border-top: 1px dotted #808080; }
.tree ul li span { padding: 0 3px; }
.tree .cur { background: #d9d9d9; }

.work { flex: 1; min-width: 0; display: flex; flex-direction: column; }
.edit { height: 28px; padding-left: 4px; gap: 6px; }
.edit .sep { margin: 0 -1px; }
#floor { width: 60px; height: 22px; border: 0; padding: 0 2px; background: #fff url("data:image/svg+xml,%3Csvg xmlns='http://www.w3.org/2000/svg' width='6' height='3'%3E%3Cpath d='M0 0h6L3 3z'/%3E%3C/svg%3E") no-repeat 52px 10px; appearance: none; border-radius: 0; }
.panes { flex: 1; display: flex; min-height: 0; gap: 4px; }
.comps { width: 183px; flex: none; margin: 3px 0 1px; background: #fff; border: 1px solid #828790; border-top: 0; }
.search { display: flex; align-items: center; gap: 4px; height: 28px; border-bottom: 1px solid #828790; margin-bottom: 1px; }
.search input { width: 157px; height: 24px; border: 1px solid #707880; padding: 0 2px 2px; background: #fff; }
.search input::placeholder { color: #808080; }
.complist { margin-left: 31px; }
.complist i { padding: 0 4px 0 5px; }
.complist .sel .i, .complist .sel i { background: #316ac5; }
.root .i + span { margin-left: -3px; }

.editor { flex: 1; min-width: 0; display: flex; flex-direction: column; margin: 0 1px 1px 0; background: #fff; border: 1px solid #d4d4d4; border-top: 0; }
.tabs { height: 21px; border-bottom: 1px solid #d4d4d4; }
.tab { height: 21px; width: 64px; background: #fff; border: 1px solid #d4d4d4; border-width: 1px 1px 0 0; }
.sheet { flex: 1; position: relative; margin: 3px 3px 2px; border: 1px solid #a0a0a0; }
.mark { position: absolute; left: -34px; top: 212px; width: 358px; height: 64px; pointer-events: none; }
table { border-collapse: collapse; table-layout: fixed; width: 370px; }
th, td { height: 19px; padding: 0 0 0 2px; border: 1px solid #c0c0c0; border-top: 0; font-weight: 400; line-height: 16px; text-align: left; overflow: hidden; }
tr > :first-child { border-left: 0; }
thead th { height: 23px; padding: 0; text-align: center; background: linear-gradient(#fff, #eee); }
.no { width: 22px; }
.name { width: 190px; }
.val { width: 126px; }
thead .hot { background: linear-gradient(#fadb9c, #f2c05c); color: #600060; }
tbody th { background: linear-gradient(90deg, #fff, #eee); padding: 0; text-align: center; }
td:nth-child(2) { padding-left: 19px; }
td:last-child { padding: 0 0 0 9px; }
td input { appearance: none; display: block; width: 13px; height: 13px; border: 1px solid #222; background: #fff; }
.b { color: #00f; }
.g { color: #808080; }
.pm { width: 13px; height: 13px; margin: 0 4px 0 -17px; border: 1px solid #b0b0b0; color: #000; line-height: 10px; vertical-align: middle; background: #fff; }
.k td:nth-child(2) { padding-left: 29px; background: linear-gradient(#c0c0c0, #c0c0c0) 8px 0 / 1px 100% no-repeat, linear-gradient(#c0c0c0, #c0c0c0) 8px 9px / 17px 1px no-repeat; }
.k.last td:nth-child(2) { background-size: 1px 10px, 17px 1px; }
.active th { background: #ffd088; }
.k.active td:nth-child(2) { background-color: #0078d7; color: #fff; }
.active td:nth-child(3) { background: #d9eaf8; }
.r { display: inline-block; width: 10px; height: 10px; margin: 0 1px; vertical-align: -1px; }

.status { display: grid; grid-template-columns: 148px 78px 98px 48px 1fr 70px; gap: 2px; height: 21px; padding-top: 1px; }
.status span { border: 1px solid #d4d4d4; background: linear-gradient(#fff, #eee); padding-left: 1px; }

.taskbar { display: flex; height: 40px; background: #000c10; color: #fff; flex: none; }
.start { width: 48px; display: flex; align-items: center; justify-content: center; background: #000; }
.start svg { width: 16px; height: 16px; }
.cortana { width: 344px; background: #333; display: flex; align-items: center; gap: 5px; padding: 0 14px 0 9px; }
.cortana input { flex: 1; min-width: 0; border: 0; padding: 0; background: none; font-size: 14px; }
.cortana input::placeholder { color: #999; }
.ring { width: 22px; height: 22px; }
.voice { width: 12px; height: 18px; }
.apps { display: flex; gap: 1px; }
.apps button { width: 48px; display: flex; align-items: center; justify-content: center; border-bottom: 2px solid transparent; }
.apps svg { width: 24px; height: 24px; }
.apps.first { padding: 0 5px 0 3px; }
.apps .run { border-bottom-color: #76b9ed; }
.apps .now { background: #30393c; }
.tray { margin-left: auto; display: flex; align-items: center; gap: 8px; padding-right: 24px; }
.tray svg { width: 16px; height: 16px; }
.tray .kb { width: 24px; height: 14px; }
.tray .note { width: 18px; height: 18px; }
.cpu, .clock { text-align: center; line-height: 18px; }
.cpu { padding-right: 10px; }
.lang { padding-right: 8px; }
.clock { padding: 0 10px; }
```
